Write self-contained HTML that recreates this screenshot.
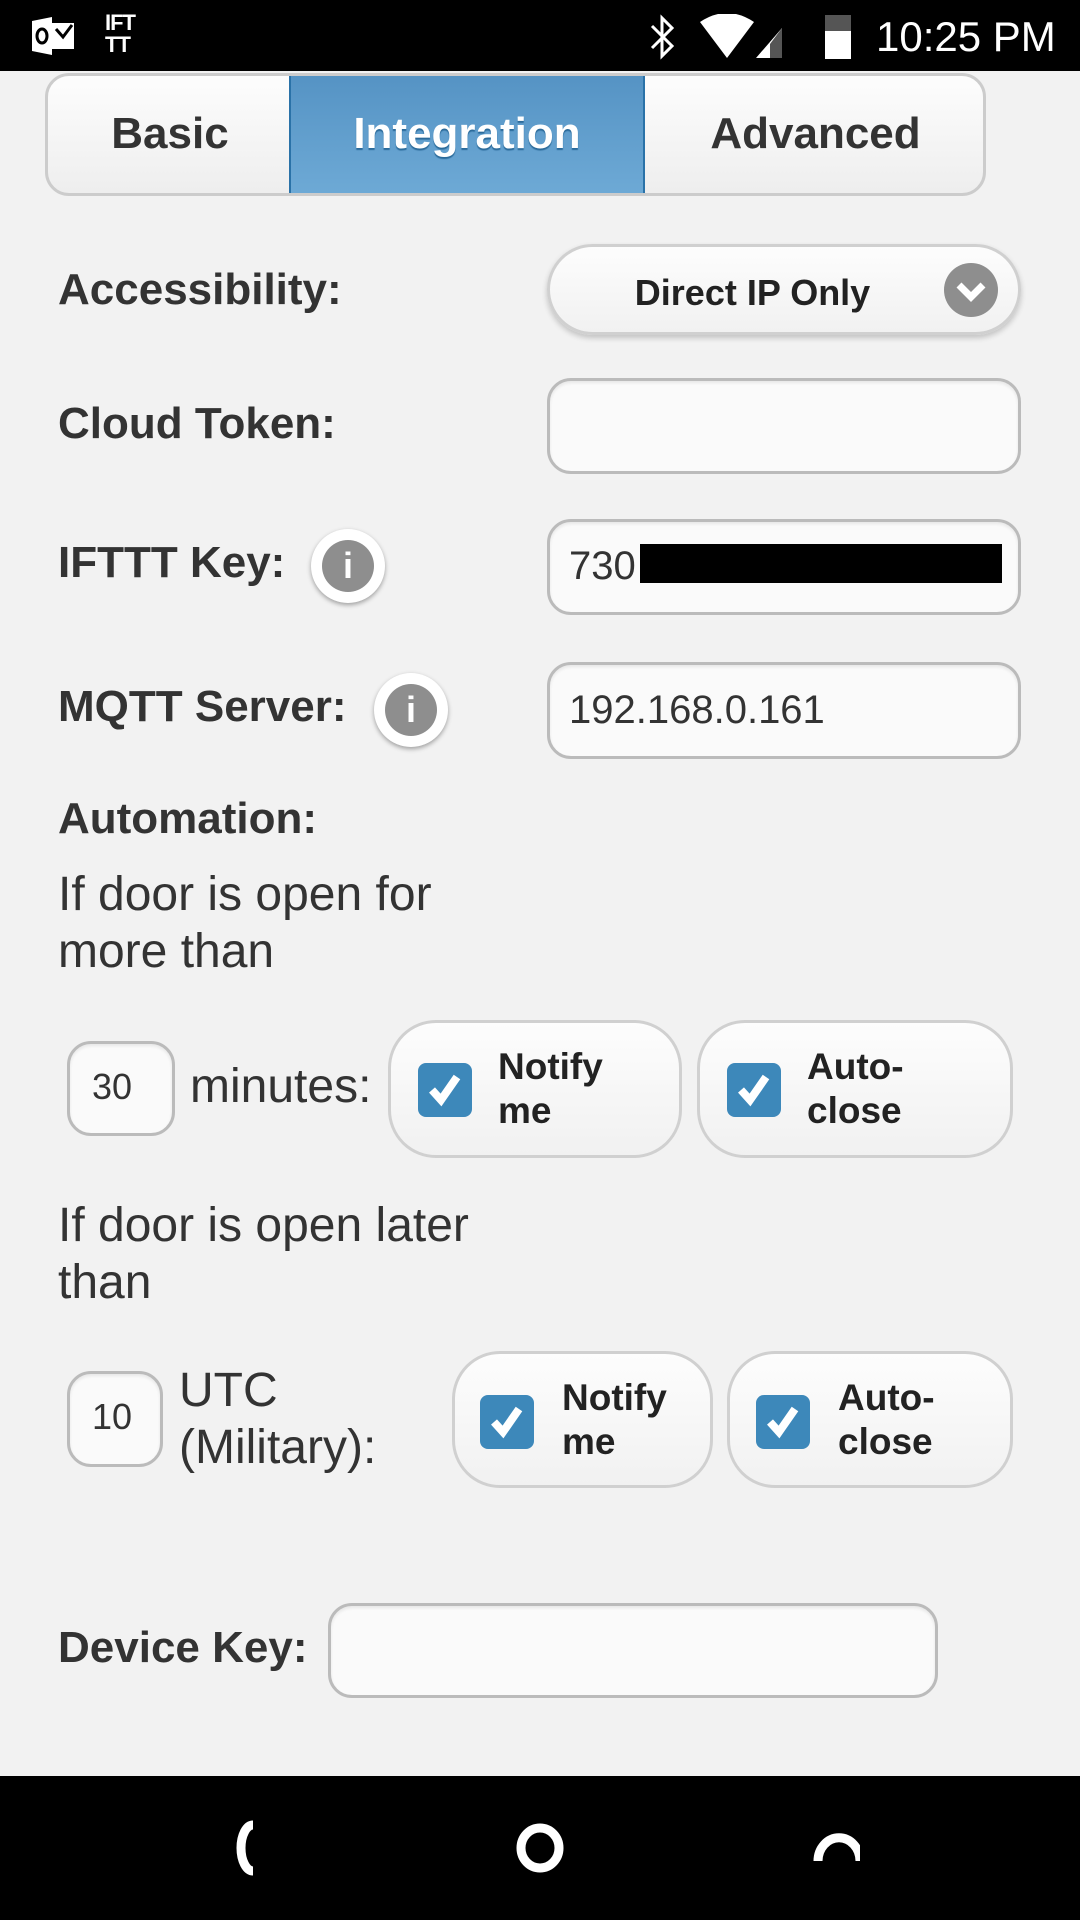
<!DOCTYPE html>
<html><head><meta charset="utf-8"><style>
*{box-sizing:border-box;margin:0;padding:0}
body{width:1080px;height:1920px;background:#f2f2f2;font-family:"Liberation Sans",sans-serif;color:#333;position:relative;overflow:hidden}
.a{position:absolute}
.lbl{font-weight:bold;font-size:44px;color:#333;line-height:1}
.txt{font-size:48px;color:#333;line-height:57px}
.inp{position:absolute;background:#fafafa;border:3px solid #bbb;border-radius:24px;box-shadow:inset 0 2px 3px rgba(0,0,0,.08)}
.btn{position:absolute;background:linear-gradient(#fdfdfd,#f1f1f1);border:3px solid #d0d0d0;border-radius:48px}
.cb{position:absolute;width:54px;height:54px;background:#3d88ba;border-radius:8px}
.cb svg{position:absolute;left:9px;top:9px}
.ct{position:absolute;font-weight:bold;font-size:37px;line-height:44px;color:#222}
.info{position:absolute;width:74px;height:74px;border-radius:50%;background:#fff;box-shadow:0 2px 5px rgba(0,0,0,.35)}
.info div{position:absolute;left:11px;top:11px;width:52px;height:52px;border-radius:50%;background:#8e8e8e;color:#fff;font-weight:bold;font-size:36px;text-align:center;line-height:52px}
</style></head><body>
<div class="a" style="left:0;top:0;width:1080px;height:71px;background:#000"></div>
<svg class="a" style="left:30px;top:15px" width="48" height="42"><path d="M2 6 L22 2 L22 40 L2 36Z" fill="#fff"/><rect x="22" y="8" width="22" height="26" fill="#fff"/><ellipse cx="12" cy="21" rx="5" ry="7" fill="none" stroke="#000" stroke-width="3"/><path d="M26 14 L33 22 L42 10" stroke="#000" stroke-width="3" fill="none"/></svg>
<div class="a" style="left:105px;top:12px;color:#fff;font-weight:bold;font-size:22px;line-height:22px;letter-spacing:-1px">IFT<br>TT</div>
<svg class="a" style="left:648px;top:14px" width="30" height="46"><path d="M4 12 L24 32 L14 42 L14 4 L24 14 L4 34" stroke="#fff" stroke-width="3" fill="none"/></svg>
<svg class="a" style="left:700px;top:14px" width="110" height="46"><path d="M0 8 Q27 -10 54 8 L27 44Z" fill="#fff"/><path d="M56 44 L82 14 L82 44Z" fill="#fff"/><path d="M70 30 L82 14 L82 44 L70 44Z" fill="#555"/></svg>
<div class="a" style="left:825px;top:15px;width:26px;height:44px;background:#fff"></div>
<div class="a" style="left:825px;top:15px;width:26px;height:16px;background:#555"></div>
<div class="a" style="left:876px;top:15px;color:#fff;font-size:42px;line-height:44px">10:25 PM</div>

<div class="a" style="left:45px;top:73px;width:941px;height:123px;border:3px solid #ccc;border-radius:24px;background:linear-gradient(#fdfdfd,#eee);overflow:hidden">
<div class="a" style="left:241px;top:-3px;width:356px;height:126px;background:linear-gradient(#5593c4,#6eaad6);border:2px solid #2a72a8"></div>
<div class="a lbl" style="left:0;width:244px;top:36px;text-align:center">Basic</div>
<div class="a lbl" style="left:241px;width:356px;top:36px;text-align:center;color:#fff;text-shadow:0 2px 1px #2a6a9a">Integration</div>
<div class="a lbl" style="left:597px;width:341px;top:36px;text-align:center">Advanced</div>
</div>

<div class="a lbl" style="left:58px;top:268px">Accessibility:</div>
<div class="btn" style="left:547px;top:244px;width:474px;height:91px;border-radius:46px;box-shadow:0 3px 6px rgba(0,0,0,.2)"></div>
<div class="a" style="left:600px;top:272px;width:305px;text-align:center;font-weight:bold;font-size:36px;color:#222">Direct IP Only</div>
<div class="a" style="left:944px;top:263px;width:54px;height:54px;border-radius:50%;background:#8e8e8e"></div>
<svg class="a" style="left:944px;top:263px" width="54" height="54"><path d="M15 22 L27 34 L39 22" stroke="#fff" stroke-width="7" fill="none"/></svg>

<div class="a lbl" style="left:58px;top:402px">Cloud Token:</div>
<div class="inp" style="left:547px;top:378px;width:474px;height:96px"></div>

<div class="a lbl" style="left:58px;top:541px">IFTTT Key:</div>
<div class="info" style="left:311px;top:529px"><div>i</div></div>
<div class="inp" style="left:547px;top:519px;width:474px;height:96px"></div>
<div class="a" style="left:569px;top:544px;font-size:40px">730</div>
<div class="a" style="left:640px;top:544px;width:362px;height:39px;background:#000"></div>

<div class="a lbl" style="left:58px;top:685px">MQTT Server:</div>
<div class="info" style="left:374px;top:673px"><div>i</div></div>
<div class="inp" style="left:547px;top:662px;width:474px;height:97px"></div>
<div class="a" style="left:569px;top:688px;font-size:40px">192.168.0.161</div>

<div class="a lbl" style="left:58px;top:797px">Automation:</div>
<div class="a txt" style="left:58px;top:866px">If door is open for<br>more than</div>

<div class="inp" style="left:67px;top:1041px;width:108px;height:95px"></div>
<div class="a" style="left:67px;top:1066px;width:90px;text-align:center;font-size:36px">30</div>
<div class="a txt" style="left:190px;top:1058px">minutes:</div>
<div class="btn" style="left:388px;top:1020px;width:294px;height:138px"></div>
<div class="cb" style="left:418px;top:1063px"><svg width="36" height="36"><path d="M5 18 L14 28 L30 5" stroke="#fff" stroke-width="8" fill="none"/></svg></div>
<div class="ct" style="left:498px;top:1045px">Notify<br>me</div>
<div class="btn" style="left:697px;top:1020px;width:316px;height:138px"></div>
<div class="cb" style="left:727px;top:1063px"><svg width="36" height="36"><path d="M5 18 L14 28 L30 5" stroke="#fff" stroke-width="8" fill="none"/></svg></div>
<div class="ct" style="left:807px;top:1045px">Auto-<br>close</div>

<div class="a txt" style="left:58px;top:1197px">If door is open later<br>than</div>

<div class="inp" style="left:67px;top:1371px;width:96px;height:96px"></div>
<div class="a" style="left:67px;top:1396px;width:90px;text-align:center;font-size:36px">10</div>
<div class="a txt" style="left:179px;top:1362px">UTC<br>(Military):</div>
<div class="btn" style="left:452px;top:1351px;width:261px;height:137px"></div>
<div class="cb" style="left:480px;top:1395px"><svg width="36" height="36"><path d="M5 18 L14 28 L30 5" stroke="#fff" stroke-width="8" fill="none"/></svg></div>
<div class="ct" style="left:562px;top:1376px">Notify<br>me</div>
<div class="btn" style="left:727px;top:1351px;width:286px;height:137px"></div>
<div class="cb" style="left:756px;top:1395px"><svg width="36" height="36"><path d="M5 18 L14 28 L30 5" stroke="#fff" stroke-width="8" fill="none"/></svg></div>
<div class="ct" style="left:838px;top:1376px">Auto-<br>close</div>

<div class="a lbl" style="left:58px;top:1626px">Device Key:</div>
<div class="inp" style="left:328px;top:1603px;width:610px;height:95px"></div>

<div class="a" style="left:0;top:1776px;width:1080px;height:144px;background:#000"></div>
<svg class="a" style="left:220px;top:1820px" width="640" height="60">
<path d="M33 5 A12 23 0 0 0 33 51" stroke="#fff" stroke-width="9" fill="none"/>
<ellipse cx="320" cy="28" rx="19" ry="20" stroke="#fff" stroke-width="9" fill="none"/>
<path d="M601 41 A19 21 0 0 1 643 41" stroke="#fff" stroke-width="9" fill="none" transform="translate(-3,0)"/>
</svg>
</body></html>
